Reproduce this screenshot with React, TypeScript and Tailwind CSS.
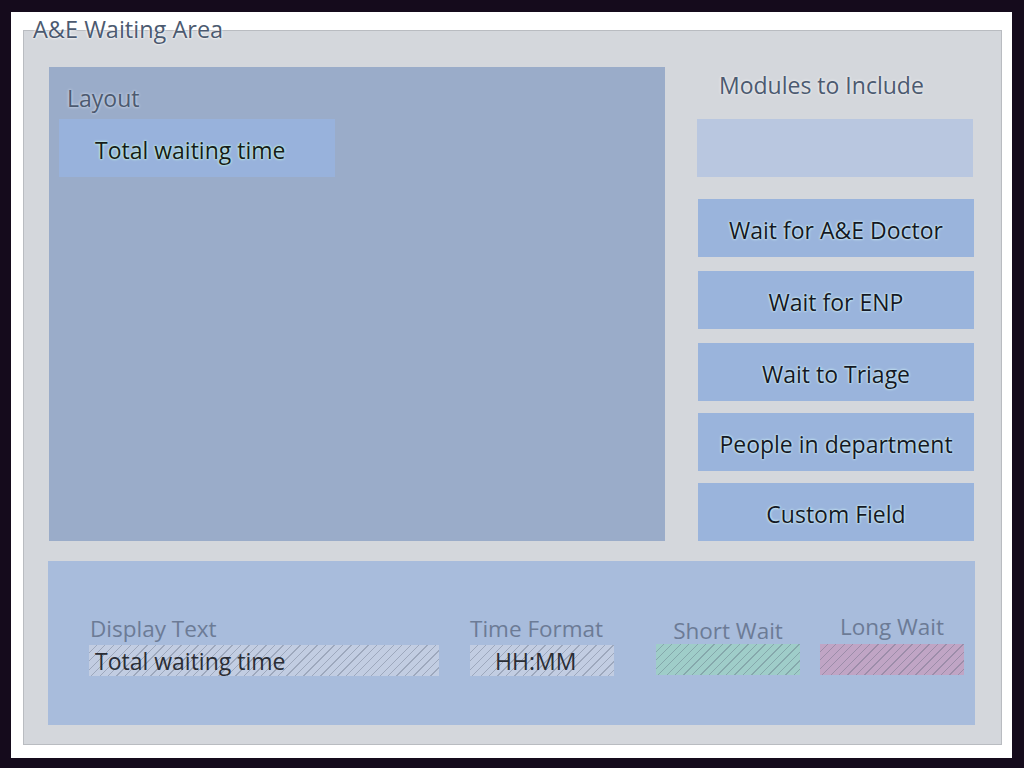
const font = "font-['Open_Sans','Noto_Sans',sans-serif]";

const modules = [
  { label: "Wait for A&E Doctor", mt: "mt-[22px]" },
  { label: "Wait for ENP", mt: "mt-[14px]" },
  { label: "Wait to Triage", mt: "mt-[14px]" },
  { label: "People in department", mt: "mt-[12px]" },
  { label: "Custom Field", mt: "mt-[12px]" },
];

const hatch =
  "bg-[repeating-linear-gradient(135deg,transparent_0px,transparent_5px,rgba(80,90,110,0.32)_5px,rgba(80,90,110,0.32)_6px)]";

function Field({
  label,
  value,
  width,
  tint,
  center,
  labelClass,
}: {
  label: string;
  value?: string;
  width: string;
  tint: string;
  center?: boolean;
  labelClass?: string;
}) {
  return (
    <div className={`flex flex-col ${width} ${center ? "items-center" : "items-start"}`}>
      <span className={`text-[22.5px] leading-[28px] text-[#6c7b96] ${labelClass ?? ""}`}>{label}</span>
      <div className={`w-full h-[31px] ${tint} ${hatch} flex items-center`}>
        {value && <span className="text-[23px] text-[#2a2d35] leading-none pt-[2px]">{value}</span>}
      </div>
    </div>
  );
}

export default function App() {
  return (
    <div className={`w-screen h-screen bg-[#150b1c] pl-[11px] pt-[12px] pr-[12px] pb-[10px] ${font}`}>
      <div className="w-full h-full bg-white pt-[18px] pl-[12px] pr-[10px] pb-[13px]">
        <div className="relative w-full h-full border border-[#b9bcc1] bg-[#d4d7dc] pt-[36px] pl-[25px]">
          <span className="absolute left-[9px] top-[-17px] text-[23.5px] leading-[30px] text-[#4c5a70] [text-shadow:0_0_3px_#fff,0_0_2px_#fff]">
            A&amp;E Waiting Area
          </span>

          <div className="flex">
            <div className="w-[616px] h-[474px] bg-[#9aacc9] pl-[10px]">
              <div className="h-[52px] pl-[8px] flex items-center pt-[11px]">
                <span className="text-[23px] text-[#4c5a70] [text-shadow:0_0_3px_#e8eef8]">Layout</span>
              </div>
              <div className="w-[276px] h-[58px] bg-[#98b2dc] flex items-center pl-[36px] pt-[4px]">
                <span className="text-[23px] text-[#161c18] [text-shadow:0_0_3px_#c8fbe8,0_0_2px_#c8fbe8]">
                  Total waiting time
                </span>
              </div>
            </div>

            <div className="ml-[32px] w-[277px] flex flex-col">
              <div className="h-[52px] pl-[22px] flex items-center pb-[16px]">
                <span className="text-[23px] text-[#4c5a70] [text-shadow:0_0_3px_#fff]">Modules to Include</span>
              </div>
              <div className="h-[58px] w-[276px] bg-[#b9c7e0]" />
              {modules.map((m) => (
                <div
                  key={m.label}
                  className={`${m.mt} ml-[1px] h-[58px] w-[276px] bg-[#9ab4dc] flex items-center justify-center pt-[4px]`}
                >
                  <span className="text-[23px] text-[#141824] [text-shadow:0_0_3px_#d4f4f8,0_0_2px_#d4f4f8]">
                    {m.label}
                  </span>
                </div>
              ))}
            </div>
          </div>

          <div className="mt-[20px] ml-[-1px] w-[927px] h-[164px] bg-[#a8bcdc] flex items-end pb-[49px] pl-[41px]">
            <Field
              label="Display Text"
              value="Total waiting time"
              width="w-[350px]"
              tint="bg-[#c2cde2] pl-[6px]"
              labelClass="pl-[1px] mb-[2px]"
            />
            <div className="ml-[31px]">
              <Field
                label="Time Format"
                value="HH:MM"
                width="w-[144px]"
                tint="bg-[#c2cde2] pl-[25px]"
                labelClass="mb-[2px]"
              />
            </div>
            <div className="ml-[42px] mb-[1px]">
              <Field label="Short Wait" width="w-[144px]" tint="bg-[#9fcdc9]" center labelClass="mb-[-1px]" />
            </div>
            <div className="ml-[20px] mb-[1px]">
              <Field label="Long Wait" width="w-[144px]" tint="bg-[#c0a5c5]" center labelClass="mb-[3px]" />
            </div>
          </div>
        </div>
      </div>
    </div>
  );
}
